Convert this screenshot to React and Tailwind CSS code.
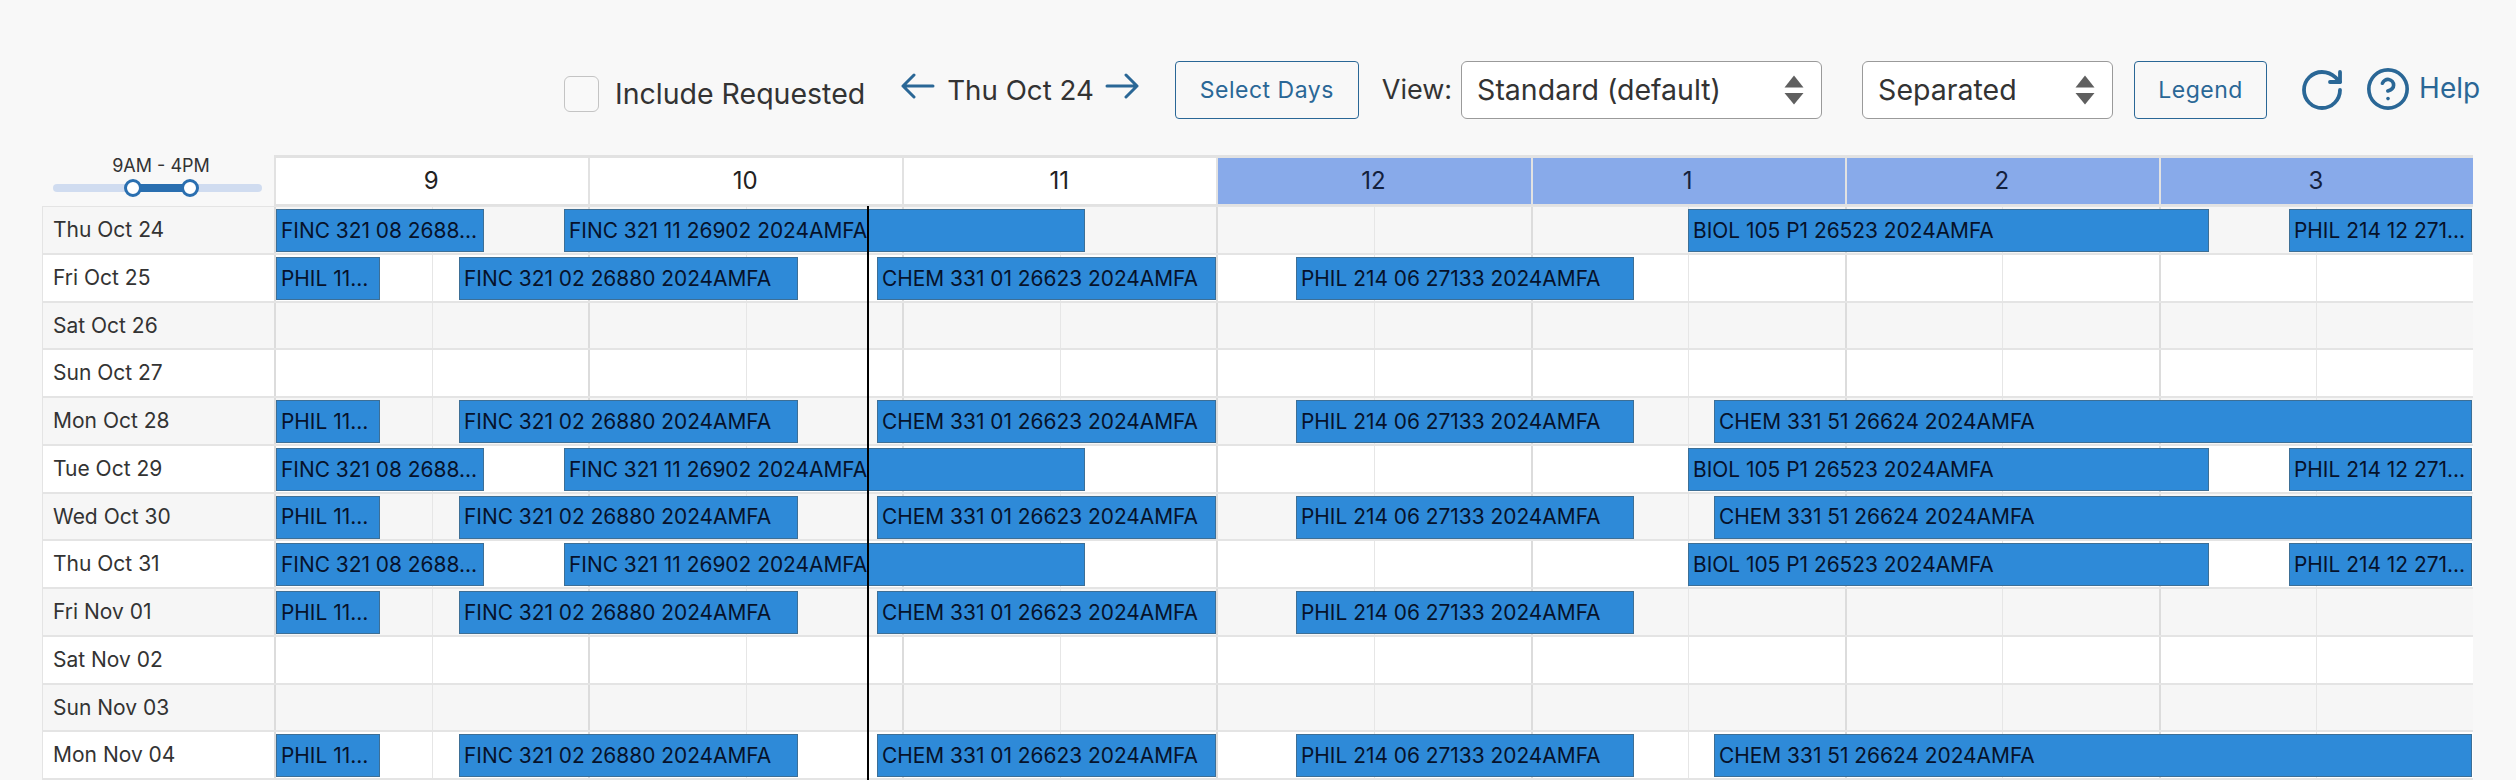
import { RotateCw, CircleHelp } from 'lucide-react';

const GRID_LEFT = 274;

const hours = [
  { label: '9' },
  { label: '10' },
  { label: '11' },
  { label: '12', off: true },
  { label: '1', off: true },
  { label: '2', off: true },
  { label: '3', off: true },
];

const bar = (title, from, to) => ({ title, from, to });

const finc08 = bar('FINC 321 08 2688…', 276, 484);
const finc11 = bar('FINC 321 11 26902 2024AMFA', 564, 1085);
const biol = bar('BIOL 105 P1 26523 2024AMFA', 1688, 2209);
const phil12 = bar('PHIL 214 12 271…', 2289, 2472);
const phil11 = bar('PHIL 11…', 276, 380);
const finc02 = bar('FINC 321 02 26880 2024AMFA', 459, 798);
const chem01 = bar('CHEM 331 01 26623 2024AMFA', 877, 1216);
const phil06 = bar('PHIL 214 06 27133 2024AMFA', 1296, 1634);
const chem51 = bar('CHEM 331 51 26624 2024AMFA', 1714, 2472);

const thu = [finc08, finc11, biol, phil12];
const mon = [phil11, finc02, chem01, phil06, chem51];
const fri = [phil11, finc02, chem01, phil06];

const days = [
  { label: 'Thu Oct 24', bars: thu },
  { label: 'Fri Oct 25', bars: fri },
  { label: 'Sat Oct 26', bars: [] },
  { label: 'Sun Oct 27', bars: [] },
  { label: 'Mon Oct 28', bars: mon },
  { label: 'Tue Oct 29', bars: thu },
  { label: 'Wed Oct 30', bars: mon },
  { label: 'Thu Oct 31', bars: thu },
  { label: 'Fri Nov 01', bars: fri },
  { label: 'Sat Nov 02', bars: [] },
  { label: 'Sun Nov 03', bars: [] },
  { label: 'Mon Nov 04', bars: mon },
];

function WideArrow({ flip, className }) {
  return (
    <svg
      width="34"
      height="26"
      viewBox="0 0 34 26"
      fill="none"
      stroke="currentColor"
      strokeWidth="3"
      strokeLinecap="round"
      strokeLinejoin="round"
      className={`text-[#2a6796] ${flip ? '-scale-x-100' : ''} ${className}`}
    >
      <path d="M13 2 L2 13 L13 24 M2 13 H32" />
    </svg>
  );
}

function SelectBox({ label, className }) {
  return (
    <div className={`flex h-[58px] items-center justify-between rounded-md border border-[#9a9a9a] bg-white pl-[15px] pr-[17px] text-[28.5px] text-[#333] ${className}`}>
      <span>{label}</span>
      <svg width="20" height="46" viewBox="0 0 20 46" className="fill-[#5f5f5f]">
        <path d="M10 8.5 L19.5 20.5 H0.5 Z" />
        <path d="M10 37.5 L19.5 26 H0.5 Z" />
      </svg>
    </div>
  );
}

function OutlineButton({ label, className }) {
  return (
    <button className={`h-[58px] rounded-[4px] border border-[#2a6796] text-[23px] tracking-[0.5px] text-[#2a6796] ${className}`}>
      {label}
    </button>
  );
}

function RangeSlider() {
  return (
    <div className="flex h-[51px] w-[232px] flex-col items-center pl-[6px]">
      <span className="mb-[7px] text-[18px] leading-[22px] text-[#333]">9AM - 4PM</span>
      <div className="relative ml-[5px] h-[8px] w-[209px] self-start rounded-full bg-[#d0dcf0]">
        <div className="absolute left-[80px] top-0 h-[8px] w-[57px] bg-[#2a6fb0]" />
        <div className="absolute left-[71px] top-[-5px] h-[18px] w-[18px] rounded-full border-[3px] border-[#2a6fb0] bg-white" />
        <div className="absolute left-[128px] top-[-5px] h-[18px] w-[18px] rounded-full border-[3px] border-[#2a6fb0] bg-white" />
      </div>
    </div>
  );
}

function DayRow({ day, index }) {
  const shaded = index % 2 === 0;
  return (
    <div className={`flex h-[47.75px] border-b-2 border-[#e4e4e4] ${shaded ? 'bg-[#f6f6f6]' : 'bg-white'}`}>
      <div className="flex w-[232px] shrink-0 items-center border-l border-[#e4e4e4] pl-[10px] text-[21px] text-[#333]">
        {day.label}
      </div>
      <div className="relative flex w-[2199px] shrink-0">
        {hours.map((h) => (
          <div key={h.label} className="flex h-full flex-1 border-l-2 border-[#dcdcdc]">
            <div className="flex-1 border-r border-[#e6e6e6]" />
            <div className="flex-1" />
          </div>
        ))}
        {day.bars.map((b) => (
          <div
            key={b.title}
            className="absolute top-[2px] flex h-[43px] items-center overflow-hidden whitespace-nowrap border border-[#3d6f96] bg-[#2e8ad8] pl-[4px] text-[20.9px] text-[#06122b]"
            style={{ left: b.from - GRID_LEFT, width: b.to - b.from }}
          >
            {b.title}
          </div>
        ))}
      </div>
    </div>
  );
}

export default function App() {
  return (
    <div className="h-[780px] w-[2516px] overflow-hidden bg-[#f8f8f8] font-['Inter','Liberation_Sans',sans-serif]">
      <div className="flex h-[155px] items-start pt-[61px]">
        <div className="ml-[564px] mt-[15px] h-[36px] w-[35px] rounded-md border border-[#c4c4c4] bg-[#f9f9f9]" />
        <span className="ml-[16px] mt-[16px] text-[28.5px] leading-[34px] text-[#333]">Include Requested</span>
        <WideArrow className="ml-[36px] mt-[12px]" />
        <span className="ml-[12px] mt-[12px] text-[27.7px] leading-[34px] text-[#333]">Thu Oct 24</span>
        <WideArrow flip className="ml-[11px] mt-[12px]" />
        <OutlineButton label="Select Days" className="ml-[36px] w-[184px]" />
        <span className="ml-[23px] mt-[12px] text-[27px] leading-[34px] text-[#333]">View:</span>
        <SelectBox label="Standard (default)" className="ml-[9px] w-[361px]" />
        <SelectBox label="Separated" className="ml-[40px] w-[251px]" />
        <OutlineButton label="Legend" className="ml-[21px] w-[133px]" />
        <RotateCw className="ml-[31px] mt-[5px] text-[#2a6796]" size={48} strokeWidth={1.9} />
        <CircleHelp className="ml-[19px] mt-[5px] text-[#2a6796]" size={46} strokeWidth={1.9} />
        <span className="ml-[8px] mt-[9px] text-[28px] leading-[36px] text-[#2a6796]">Help</span>
      </div>

      <div className="relative ml-[42px] w-[2431px]">
        <div className="flex h-[51px]">
          <RangeSlider />
          <div className="flex w-[2199px] shrink-0 border-t-[3px] border-[#e2e2e2]">
            {hours.map((h) => (
              <div
                key={h.label}
                className={`flex flex-1 items-center justify-center border-b-2 border-l-2 border-[#e2e2e2] pr-[2px] text-[24px] ${h.off ? 'bg-[#88aaea] text-[#14213d]' : 'bg-white text-[#222]'}`}
              >
                {h.label}
              </div>
            ))}
          </div>
        </div>
        <div className="border-t border-[#e4e4e4]">
          {days.map((d, i) => (
            <DayRow key={d.label} day={d} index={i} />
          ))}
        </div>
        {/* current time marker */}
        <div className="absolute bottom-0 left-[825px] top-[51px] w-[2px] bg-black" />
      </div>
    </div>
  );
}
